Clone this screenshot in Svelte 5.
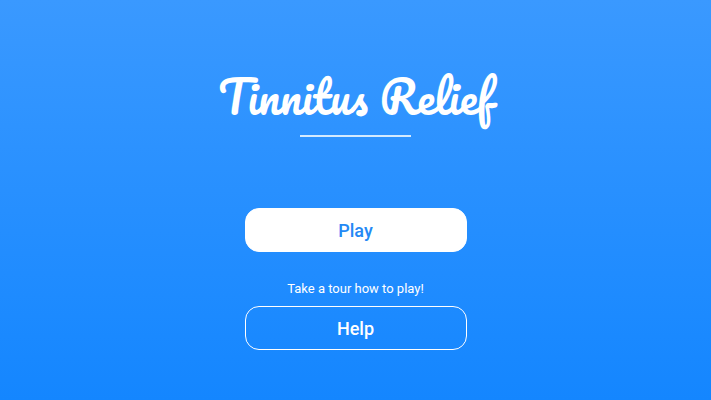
<script lang="ts">
	const title = 'Tinnitus Relief';

	let { onplay, onhelp }: { onplay?: () => void; onhelp?: () => void } = $props();
</script>

<svelte:head>
	<title>{title}</title>
</svelte:head>

<main class="home">
	<header>
		<h1>{title}</h1>
		<hr />
	</header>

	<div class="actions">
		<button type="button" class="play" onclick={() => onplay?.()}>Play</button>
		<p id="tour">Take a tour how to play!</p>
		<button type="button" class="help" aria-describedby="tour" onclick={() => onhelp?.()}>
			Help
		</button>
	</div>
</main>

<style>
	:global(body) {
		margin: 0;
	}

	.home {
		box-sizing: border-box;
		display: flex;
		flex-direction: column;
		align-items: center;
		gap: 71px;
		min-height: 100vh;
		padding: 67px 16px 48px;
		background: linear-gradient(#3a99ff, #1486ff);
		color: #fff;
		font-family: Roboto, sans-serif;
	}

	header {
		display: flex;
		flex-direction: column;
		align-items: center;
		gap: 8px;
	}

	h1 {
		margin: 0;
		font-family: Pacifico, Lato, cursive;
		font-size: 44px;
		font-weight: 400;
		line-height: 60px;
		text-align: center;
	}

	hr {
		width: 111px;
		height: 2px;
		margin: 0;
		border: 0;
		background: #d3eaff;
	}

	.actions {
		display: flex;
		flex-direction: column;
		width: 100%;
		max-width: 222px;
	}

	p {
		margin: 28px 0 8px;
		font-size: 13px;
		line-height: 18px;
		text-align: center;
	}

	button {
		box-sizing: border-box;
		height: 44px;
		padding: 2px 16px 0;
		border: 1px solid #fff;
		border-radius: 14px;
		font: 500 18px/24px Roboto, sans-serif;
		cursor: pointer;
	}

	.play {
		background: #fff;
		color: #2489f5;
	}

	.help {
		background: transparent;
		color: #fff;
	}
</style>
